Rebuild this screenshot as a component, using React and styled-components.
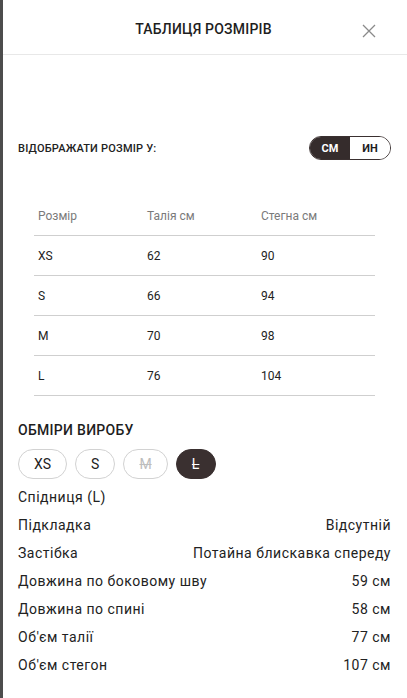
import React, { useState } from 'react';
import styled, { createGlobalStyle } from 'styled-components';

const GlobalStyle = createGlobalStyle`
  html, body {
    margin: 0;
    padding: 0;
    background: #ffffff;
    font-family: Roboto, "Liberation Sans", Arial, sans-serif;
    color: #222222;
  }
  * { box-sizing: border-box; }
`;

const sizes = [
  { size: 'XS', waist: 62, hips: 90 },
  { size: 'S', waist: 66, hips: 94 },
  { size: 'M', waist: 70, hips: 98 },
  { size: 'L', waist: 76, hips: 104 },
];

const chips = [
  { label: 'XS' },
  { label: 'S' },
  { label: 'M', disabled: true },
  { label: 'L', active: true },
];

const details = [
  ['Підкладка', 'Відсутній'],
  ['Застібка', 'Потайна блискавка спереду'],
  ['Довжина по боковому шву', '59 см'],
  ['Довжина по спині', '58 см'],
  ["Об'єм талії", '77 см'],
  ["Об'єм стегон", '107 см'],
];

const App = () => {
  const [unit, setUnit] = useState('cm');

  return (
    <>
      <GlobalStyle />
      <Sheet>
        <Header>
          <Title>ТАБЛИЦЯ РОЗМІРІВ</Title>
          <CloseButton aria-label="close">
            <svg width="14" height="14" viewBox="0 0 14 14">
              <path d="M1 1L13 13M13 1L1 13" stroke="#8a8a8a" strokeWidth="1.3" fill="none" />
            </svg>
          </CloseButton>
        </Header>

        <Body>
          <UnitRow>
            <UnitLabel>ВІДОБРАЖАТИ РОЗМІР У:</UnitLabel>
            <Toggle>
              <ToggleOption $active={unit === 'cm'} onClick={() => setUnit('cm')}>СМ</ToggleOption>
              <ToggleOption $active={unit === 'in'} onClick={() => setUnit('in')}>ИН</ToggleOption>
            </Toggle>
          </UnitRow>

          <Table>
            <TableRow $head>
              <Cell>Розмір</Cell>
              <Cell>Талія см</Cell>
              <Cell>Стегна см</Cell>
            </TableRow>
            {sizes.map((s) => (
              <TableRow key={s.size}>
                <Cell>{s.size}</Cell>
                <Cell>{s.waist}</Cell>
                <Cell>{s.hips}</Cell>
              </TableRow>
            ))}
          </Table>

          <SectionTitle>ОБМІРИ ВИРОБУ</SectionTitle>
          <Chips>
            {chips.map((c) => (
              <Chip key={c.label} $active={c.active} $disabled={c.disabled}>
                {c.label}
              </Chip>
            ))}
          </Chips>

          <DetailList>
            <DetailRow>
              <span>Спідниця (L)</span>
            </DetailRow>
            {details.map(([k, v]) => (
              <DetailRow key={k}>
                <span>{k}</span>
                <span>{v}</span>
              </DetailRow>
            ))}
          </DetailList>
        </Body>
      </Sheet>
    </>
  );
};

const Sheet = styled.div`
  width: 407px;
  height: 698px;
  overflow: hidden;
  background: #ffffff;
  border-left: 3px solid #4d4d4d;
`;

const Header = styled.header`
  position: relative;
  height: 55px;
  display: flex;
  align-items: center;
  justify-content: center;
  border-bottom: 1px solid #e8e8e8;
  margin-left: -3px;
`;

const Title = styled.h1`
  margin: 4px 0 0;
  font-size: 14px;
  font-weight: 500;
  letter-spacing: 0.2px;
  color: #1e1e1e;
`;

const CloseButton = styled.button`
  position: absolute;
  right: 31px;
  top: 24px;
  padding: 0;
  border: 0;
  background: none;
  display: flex;
  cursor: pointer;
`;

const Body = styled.div`
  padding: 81px 16px 0 15px;
`;

const UnitRow = styled.div`
  display: flex;
  align-items: center;
  justify-content: space-between;
  height: 24px;
`;

const UnitLabel = styled.span`
  font-size: 11px;
  font-weight: 500;
  letter-spacing: 0.2px;
  color: #222;
`;

const Toggle = styled.div`
  display: flex;
  width: 82px;
  height: 24px;
  border: 1px solid #3a3030;
  border-radius: 12px;
  overflow: hidden;
`;

const ToggleOption = styled.button`
  flex: 1;
  border: 0;
  padding: 0;
  font-family: inherit;
  font-size: 11px;
  font-weight: 700;
  cursor: pointer;
  background: ${(p) => (p.$active ? '#352c2c' : '#ffffff')};
  color: ${(p) => (p.$active ? '#ffffff' : '#1e1e1e')};
`;

const Table = styled.div`
  margin: 36px 16px 0;
`;

const TableRow = styled.div`
  display: grid;
  grid-template-columns: 109px 114px 1fr;
  align-items: center;
  height: 40px;
  padding-left: 4px;
  border-bottom: 1px solid #cfcfcf;
  font-size: 12px;
  color: ${(p) => (p.$head ? '#7a7a7a' : '#222')};
`;

const Cell = styled.div``;

const SectionTitle = styled.h2`
  margin: 24px 0 0;
  font-size: 14px;
  font-weight: 500;
  line-height: 20px;
  letter-spacing: 0.3px;
  color: #1e1e1e;
`;

const Chips = styled.div`
  display: flex;
  gap: 8px;
  margin-top: 9px;
`;

const Chip = styled.span`
  display: inline-flex;
  align-items: center;
  justify-content: center;
  height: 30px;
  min-width: 40px;
  padding: 0 15px;
  border-radius: 15px;
  font-size: 14px;
  border: 1px solid ${(p) => (p.$active ? '#3a3030' : '#d2d2d2')};
  background: ${(p) => (p.$active ? '#3a3030' : '#ffffff')};
  color: ${(p) => (p.$active ? '#ffffff' : p.$disabled ? '#bdbdbd' : '#222')};
  text-decoration: ${(p) => (p.$active || p.$disabled ? 'line-through' : 'none')};
`;

const DetailList = styled.div`
  margin-top: 4px;
`;

const DetailRow = styled.div`
  display: flex;
  justify-content: space-between;
  align-items: center;
  height: 28px;
  font-size: 14px;
  letter-spacing: 0.5px;
  color: #222;
`;

export default App;
